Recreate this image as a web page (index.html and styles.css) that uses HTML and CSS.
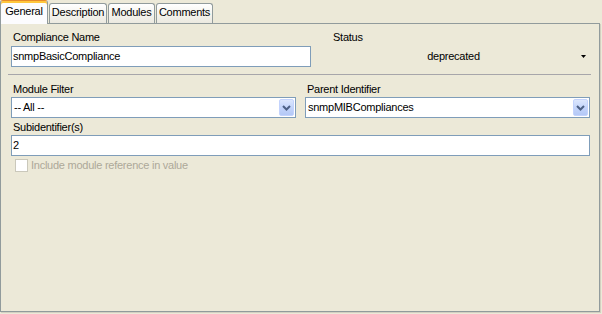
FILE: index.html
```html
<!DOCTYPE html>
<html lang="en">
<head>
    <meta charset="UTF-8">
    <title>Compliance</title>
    <link rel="stylesheet" href="styles.css">
</head>
<body>

    <div class="tabs">
        <div class="tab active">General</div>
        <div class="tab tab-desc">Description</div>
        <div class="tab tab-mod">Modules</div>
        <div class="tab tab-com">Comments</div>
    </div>

    <div class="panel">
        <div class="row-top">
            <div class="name-col">
                <div class="label">Compliance Name</div>
                <div class="textbox">snmpBasicCompliance</div>
            </div>
            <div class="status-col">
                <div class="label">Status</div>
                <div class="plain-combo">
                    <span class="plain-value">deprecated</span>
                    <span class="plain-arrow">
                        <svg width="5" height="3" viewBox="0 0 5 3"><path d="M0 0H5L2.5 3Z" fill="#000"/></svg>
                    </span>
                </div>
            </div>
        </div>

        <div class="separator"></div>

        <div class="row-two">
            <div>
                <div class="label label-tight">Module Filter</div>
                <div class="combo">
                    <span class="combo-value">-- All --</span>
                    <span class="combo-btn">
                        <svg width="9" height="6" viewBox="0 0 9 6"><path d="M1 1L4.5 4.5L8 1" fill="none" stroke="#4d6185" stroke-width="2"/></svg>
                    </span>
                </div>
            </div>
            <div>
                <div class="label label-tight">Parent Identifier</div>
                <div class="combo">
                    <span class="combo-value">snmpMIBCompliances</span>
                    <span class="combo-btn">
                        <svg width="9" height="6" viewBox="0 0 9 6"><path d="M1 1L4.5 4.5L8 1" fill="none" stroke="#4d6185" stroke-width="2"/></svg>
                    </span>
                </div>
            </div>
        </div>

        <div class="sub-group">
            <div class="label label-tight">Subidentifier(s)</div>
            <div class="textbox">2</div>
        </div>

        <div class="check disabled">
            <span class="check-box"></span>
            <span>Include module reference in value</span>
        </div>
    </div>

</body>
</html>
```

FILE: styles.css
```css
* {
    box-sizing: border-box;
}
body {
    margin: 0;
    background-color: #ece9d8;
    font-family: "Liberation Sans", Arial, sans-serif;
    font-size: 11px;
    line-height: 13px;
    letter-spacing: -0.25px;
    color: #000;
    width: 602px;
    height: 314px;
    overflow: hidden;
}

/* tabs */
.tabs {
    display: flex;
    align-items: flex-start;
    height: 24px;
    position: relative;
    z-index: 1;
}
.tab {
    margin-top: 3px;
    height: 20px;
    padding-top: 2px;
    text-align: center;
    white-space: nowrap;
    border: 1px solid #919b9c;
    border-bottom: none;
    border-radius: 3px 3px 0 0;
    background: linear-gradient(#ffffff, #f3f2ec 60%, #ebe9e0);
}
.tab.active {
    width: 48px;
    margin-top: 0;
    height: 24px;
    padding-top: 4px;
    border-top-color: #e68b2c;
    background: #fcfcfe;
    box-shadow: inset 0 2px 0 #ffc73c;
}
.tab-desc {
    width: 58px;
    margin-left: 1px;
}
.tab-mod {
    width: 47px;
    margin-left: 1px;
}
.tab-com {
    width: 57px;
    margin-left: 1px;
}

/* panel */
.panel {
    width: 600px;
    height: 289px;
    margin-top: -1px;
    padding: 7px 9px 0 10px;
    border: 1px solid #919b9c;
    background-color: #ece9d8;
    box-shadow: 1px 1px 0 #d3d0c1;
}
.label {
    padding-left: 2px;
    margin-bottom: 2px;
    white-space: nowrap;
}
.label-tight {
    margin-bottom: 1px;
}
.row-top {
    display: flex;
}
.name-col {
    width: 300px;
}
.status-col {
    width: 259px;
    margin-left: 20px;
}
.textbox {
    height: 21px;
    padding-left: 1px;
    line-height: 19px;
    border: 1px solid #7f9db9;
    background-color: #fff;
    white-space: nowrap;
}
.plain-combo {
    display: flex;
    align-items: center;
    height: 21px;
}
.plain-value {
    flex: 1;
    text-align: center;
}
.plain-arrow {
    width: 14px;
    display: flex;
    justify-content: center;
    align-items: center;
}
.plain-arrow svg {
    display: block;
}
.separator {
    height: 1px;
    margin: 7px -1px 8px -3px;
    background-color: #a7a6aa;
}

/* combos */
.row-two {
    display: grid;
    grid-template-columns: 285px 285px;
    column-gap: 9px;
}
.combo {
    display: flex;
    height: 21px;
    padding: 1px;
    border: 1px solid #7f9db9;
    background-color: #fff;
}
.combo-value {
    flex: 1;
    padding-left: 1px;
    line-height: 17px;
    white-space: nowrap;
}
.combo-btn {
    width: 15px;
    height: 17px;
    display: flex;
    align-items: center;
    justify-content: center;
    border: 1px solid #c3d3fd;
    border-radius: 2px;
    background: linear-gradient(#dce7fd, #c4d5fb 50%, #b4c8f6);
}
.combo-btn svg {
    display: block;
}
.sub-group {
    margin-top: 3px;
}

/* checkbox */
.check {
    display: flex;
    align-items: center;
    margin-top: 2px;
    padding-left: 4px;
    height: 14px;
}
.check-box {
    width: 13px;
    height: 13px;
    margin-right: 3px;
    border: 1px solid #cac8bb;
    background-color: #fff;
}
.check.disabled {
    color: #aca899;
}
```
